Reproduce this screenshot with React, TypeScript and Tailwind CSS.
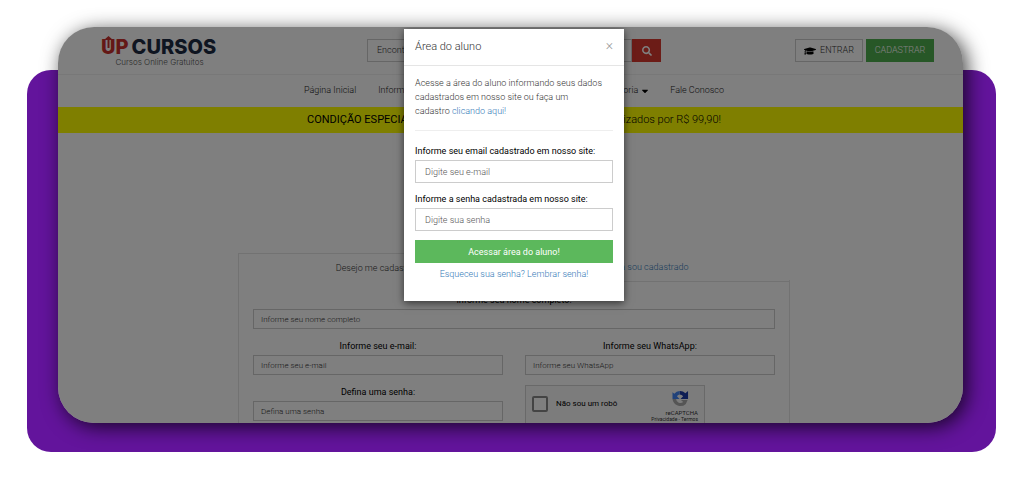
import React from "react";
import { FaSearch, FaGraduationCap, FaCaretDown } from "react-icons/fa";

const Logo = () => {
  return (
    <a href="#" className="block w-[117px] pt-0.5 whitespace-nowrap">
      <span className="flex items-end font-['Inter'] text-[20px] leading-[20px] font-extrabold">
        <span className="relative text-[#c9302c]">
          U
          <svg
            viewBox="0 0 9 12"
            className="absolute -top-px left-[3px] h-[12px] w-[9px]"
            fill="currentColor"
          >
            <path d="M4.5 0 9 4H5.500v8h-2V4H0z" />
          </svg>
        </span>
        <span className="text-[#c9302c]">P</span>
        <span className="ml-[3px] text-[#1c2b42]">CURSOS</span>
      </span>
      <span className="block text-center font-['Inter'] text-[8px] leading-[10px] text-[#555]">
        Cursos Online Gratuitos
      </span>
    </a>
  );
};

const Header = () => {
  return (
    <header>
      <div className="border-b border-[#f0f0f0] pl-[14px]">
        <div className="mx-auto flex h-[47px] max-w-[833px] items-center">
          <Logo />
          <form className="ml-[149px] flex h-[23px] w-[294px]">
            <input
              type="text"
              aria-label="Buscar curso"
              placeholder="Encontre o curso que deseja"
              className="min-w-0 flex-1 border border-[#ccc] px-[9px] placeholder:text-[#333]"
            />
            <button
              type="button"
              aria-label="Buscar"
              className="flex w-[29px] items-center justify-center bg-[#d9382e] text-[10px] text-white"
            >
              <FaSearch />
            </button>
          </form>
          <div className="ml-auto flex gap-[3px]">
            <button
              type="button"
              className="flex h-[23px] w-[68px] items-center justify-center gap-1 border border-[#ccc] text-[#333]"
            >
              <FaGraduationCap className="text-[12px] text-black" />
              ENTRAR
            </button>
            <button
              type="button"
              className="h-[23px] w-[68px] bg-[#4fae4f] text-white"
            >
              CADASTRAR
            </button>
          </div>
        </div>
      </div>
      <nav className="pl-[7px]">
        <div className="mx-auto flex h-8 max-w-[420px] items-center justify-between text-[#222]">
          <div className="flex gap-[22px]">
            <a href="#">Página Inicial</a>
            <a href="#">Informações</a>
          </div>
          <div className="flex gap-5">
            <a href="#" className="flex items-center gap-0.5">
              Categoria
              <FaCaretDown className="text-[10px] text-black" />
            </a>
            <a href="#">Fale Conosco</a>
          </div>
        </div>
      </nav>
    </header>
  );
};

const Banner = () => {
  return (
    <div className="bg-[#ffff00] pl-[7px]">
      <p className="mx-auto flex h-[26px] max-w-[414px] items-center justify-between text-[11px] text-black">
        <span className="font-normal">CONDIÇÃO ESPECIAL:</span>
        <span>digitalizados por R$ 99,90!</span>
      </p>
    </div>
  );
};

type FieldProps = {
  id: string;
  label: string;
  placeholder: string;
  type?: string;
};

const Field = ({ id, label, placeholder, type = "text" }: FieldProps) => {
  return (
    <div className="flex flex-col">
      <label
        htmlFor={id}
        className="mb-0.5 text-center leading-[14px] font-normal text-black"
      >
        {label}
      </label>
      <input
        id={id}
        type={type}
        placeholder={placeholder}
        className="h-5 w-full border border-[#ccc] px-[7px] text-[8px] placeholder:text-[#333]"
      />
    </div>
  );
};

const Recaptcha = () => {
  return (
    <div className="flex h-[38px] w-[180px] items-start justify-between border border-b-0 border-[#d3d3d3] bg-[#f9f9f9] px-1.5">
      <label className="mt-[10px] flex items-center gap-2 text-[8px] font-normal text-black">
        <input
          type="checkbox"
          className="size-4 appearance-none rounded-[2px] border-2 border-[#888] bg-white"
        />
        Não sou um robô
      </label>
      <div className="mt-[5px] flex w-[46px] flex-col items-end text-[6px] leading-[7px] font-normal text-[#333]">
        <svg viewBox="0 0 20 18" className="mr-2 mb-0.5 h-[16px] w-[19px]">
          <path d="M9 0a9 9 0 0 1 6.500 2.500L18.500 0V9H10l3-3a5 5 0 0 0-4-2z" fill="#1c3aa9" />
          <path d="M9 0v4a5 5 0 0 0-3 1.800L9 9H1V1.500l2 1.500A9 9 0 0 1 9 0z" fill="#4285f4" />
          <path d="M1 9h4a5 5 0 0 0 8 3.500L10.500 10H18l-2 4.500A9 9 0 0 1 1 9z" fill="#ababab" />
        </svg>
        <span>reCAPTCHA</span>
        <span className="text-[5px] whitespace-nowrap">
          Privacidade - Termos
        </span>
      </div>
    </div>
  );
};

const RegisterForm = () => {
  return (
    <section className="mt-[120px] pl-[7px]">
      <div className="mx-auto max-w-[552px]">
        <div className="grid h-[27px] grid-cols-2 text-center leading-[28px]">
          <a
            href="#"
            className="border-t border-l border-[#e5e5e5] text-[#333]"
          >
            Desejo me cadastrar
          </a>
          <a href="#" className="border-b border-[#e5e5e5] text-[#337ab7]">
            Já sou cadastrado
          </a>
        </div>
        <form className="grid grid-cols-2 gap-x-[22px] gap-y-[10px] border-x border-[#e5e5e5] px-[14px] pt-[13px]">
          <div className="col-span-2">
            <Field
              id="nome"
              label="Informe seu nome completo:"
              placeholder="Informe seu nome completo"
            />
          </div>
          <Field
            id="email"
            label="Informe seu e-mail:"
            placeholder="Informe seu e-mail"
            type="email"
          />
          <Field
            id="whatsapp"
            label="Informe seu WhatsApp:"
            placeholder="Informe seu WhatsApp"
          />
          <Field
            id="senha"
            label="Defina uma senha:"
            placeholder="Defina uma senha"
            type="password"
          />
          <Recaptcha />
        </form>
      </div>
    </section>
  );
};

const LoginModal = () => {
  return (
    <div className="absolute inset-0 flex items-start justify-center bg-black/50 pt-0.5 pl-[7px]">
      <div
        role="dialog"
        aria-labelledby="modal-title"
        className="w-[220px] bg-white shadow-[0_2px_8px_rgba(0,0,0,0.6)]"
      >
        <div className="flex h-[37px] items-center justify-between border-b border-[#e5e5e5] px-[11px] text-[#333]">
          <h4 id="modal-title" className="text-[11px]">
            Área do aluno
          </h4>
          <button
            type="button"
            aria-label="Fechar"
            className="pb-1 text-[14px] leading-none text-[#999]"
          >
            ×
          </button>
        </div>
        <div className="px-[11px] pt-[10px] pb-5 leading-[14px]">
          <p className="pr-[9px] text-[#333]">
            Acesse a área do aluno informando seus dados cadastrados em nosso
            site ou faça um cadastro{" "}
            <a href="#" className="text-[#337ab7]">
              clicando aqui!
            </a>
          </p>
          <hr className="mt-3 mb-[13px] border-[#eee]" />
          <form className="flex flex-col">
            <label htmlFor="login" className="mb-0.5 font-normal text-black">
              Informe seu email cadastrado em nosso site:
            </label>
            <input
              id="login"
              type="email"
              placeholder="Digite seu e-mail"
              className="mb-[9px] h-[23px] border border-[#ccc] px-[9px] placeholder:text-[#555]"
            />
            <label
              htmlFor="login-senha"
              className="mb-0.5 font-normal text-black"
            >
              Informe a senha cadastrada em nosso site:
            </label>
            <input
              id="login-senha"
              type="password"
              placeholder="Digite sua senha"
              className="mb-[9px] h-[23px] border border-[#ccc] px-[9px] placeholder:text-[#555]"
            />
            <button
              type="button"
              className="h-[23px] bg-[#5cb85c] font-normal text-white"
            >
              Acessar área do aluno!
            </button>
            <a href="#" className="mt-1 text-center text-[#337ab7]">
              Esqueceu sua senha? Lembrar senha!
            </a>
          </form>
        </div>
      </div>
    </div>
  );
};

const App = () => {
  return (
    <main className="bg-white px-[27px] pt-[70px] pb-[25px] font-['Roboto',sans-serif] text-[9px] font-light">
      <div className="mr-px flex rounded-[24px] bg-[#63149c] pr-[33px] pb-[29px] pl-[31px]">
        <div className="relative -mt-[43px] min-w-0 flex-1 overflow-hidden rounded-[36px] bg-white shadow-[4px_4px_20px_rgba(0,0,0,0.75)]">
          <Header />
          <Banner />
          <RegisterForm />
          <LoginModal />
        </div>
      </div>
    </main>
  );
};

export default App;
